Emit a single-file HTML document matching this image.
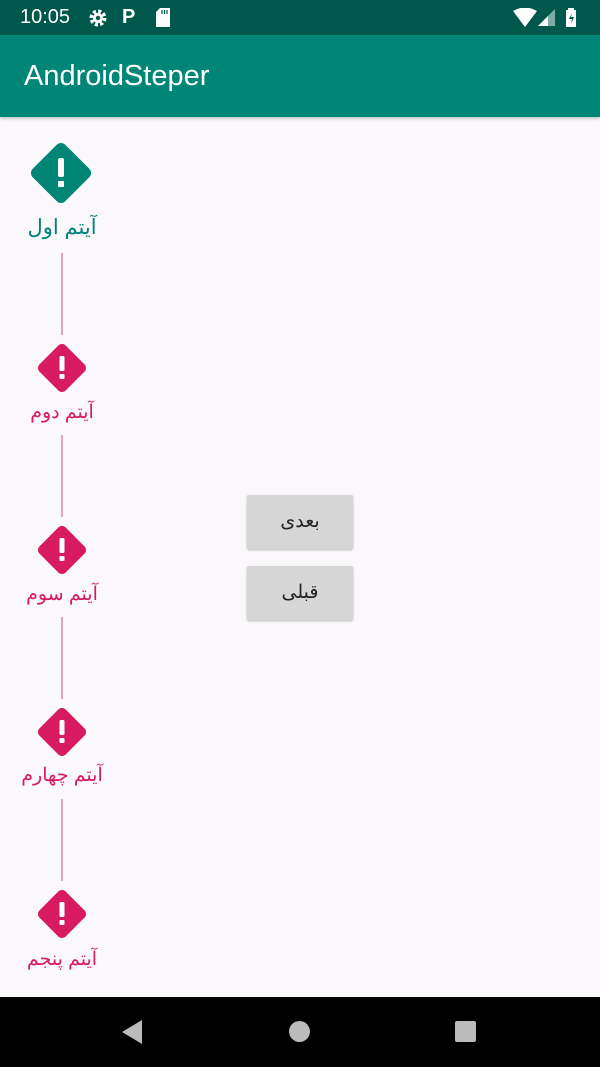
<!DOCTYPE html>
<html><head><meta charset="utf-8"><style>
body{margin:0;width:600px;height:1067px;background:#faf8fa;position:relative;overflow:hidden;font-family:"Liberation Sans","Noto Sans CJK SC",sans-serif}
.abs{position:absolute}
.lbl{position:absolute;left:0;width:124px;text-align:center;font-size:19px;line-height:24px;direction:rtl}
.line{position:absolute;left:61px;width:2px;background:#dca6bd}
.btn{position:absolute;left:247px;width:106px;height:54px;background:#d6d6d6;border-radius:2px;box-shadow:0 1px 2px rgba(0,0,0,.25);text-align:center;line-height:54px;font-size:19px;color:#222;direction:rtl}
</style></head><body>
<div class="abs" style="left:0;top:0;width:600px;height:35px;background:#00574b"></div>
<div class="abs" style="left:20px;top:6px;color:#fff;font-size:20px">10:05</div>
<svg class="abs" style="left:88px;top:8px" width="20" height="20" viewBox="0 0 20 20"><circle cx="10" cy="10" r="6.5" fill="none" stroke="#fff" stroke-width="4" stroke-dasharray="3 2.1"/><circle cx="10" cy="10" r="5" fill="#fff"/><circle cx="10" cy="10" r="2.2" fill="#00574b"/></svg>
<div class="abs" style="left:122px;top:6px;color:#fff;font-size:20px;font-weight:bold">P</div>
<svg class="abs" style="left:155px;top:8px" width="16" height="19"><path d="M5 0H15V19H1V4Z" fill="#fff"/><path d="M7 2v4M9.5 2v4M12 2v4" stroke="#00574b" stroke-width="1.2"/></svg>
<svg class="abs" style="left:512px;top:8px" width="26" height="20"><path d="M1 3Q13 -4 25 3L13 19Z" fill="#fff"/></svg>
<svg class="abs" style="left:538px;top:8px" width="18" height="19"><path d="M17 1V18H0Z" fill="#fff" opacity=".5"/><path d="M10 9V18H0L10 8Z" fill="#fff"/></svg>
<svg class="abs" style="left:565px;top:6px" width="12" height="22"><path d="M3 2h6v2h2v17H1V4h2z" fill="#fff"/><path d="M7 7L4 13h3l-1 5 3-7H6z" fill="#00574b"/></svg>
<div class="abs" style="left:0;top:35px;width:600px;height:82px;background:#008577;box-shadow:0 2px 3px rgba(0,0,0,.2)"></div>
<div class="abs" style="left:24px;top:60px;color:#fff;font-size:29px">AndroidSteper</div>

<svg class="abs" style="left:27px;top:139px" width="68" height="68" viewBox="0 0 68 68"><rect x="11" y="11" width="46" height="46" rx="6" transform="rotate(45 34 34)" fill="#008577"/><rect x="31" y="19" width="6" height="19" rx="2" fill="#fff"/><rect x="31" y="42" width="6" height="6" rx="1" fill="#fff"/></svg>
<div class="lbl" style="top:216px;color:#008577;font-size:21px">آیتم اول</div>
<div class="line" style="top:253px;height:82px"></div>

<svg class="abs" style="left:35px;top:341px" width="54" height="54" viewBox="0 0 54 54"><rect x="8.5" y="8.5" width="37" height="37" rx="5" transform="rotate(45 27 27)" fill="#d81b60"/><rect x="24.5" y="15" width="5" height="15" rx="1.5" fill="#fff"/><rect x="24.5" y="33" width="5" height="5" rx="1" fill="#fff"/></svg>
<div class="lbl" style="top:401px;color:#d81b60">آیتم دوم</div>
<div class="line" style="top:435px;height:82px"></div>

<svg class="abs" style="left:35px;top:523px" width="54" height="54" viewBox="0 0 54 54"><rect x="8.5" y="8.5" width="37" height="37" rx="5" transform="rotate(45 27 27)" fill="#d81b60"/><rect x="24.5" y="15" width="5" height="15" rx="1.5" fill="#fff"/><rect x="24.5" y="33" width="5" height="5" rx="1" fill="#fff"/></svg>
<div class="lbl" style="top:583px;color:#d81b60">آیتم سوم</div>
<div class="line" style="top:617px;height:82px"></div>

<svg class="abs" style="left:35px;top:705px" width="54" height="54" viewBox="0 0 54 54"><rect x="8.5" y="8.5" width="37" height="37" rx="5" transform="rotate(45 27 27)" fill="#d81b60"/><rect x="24.5" y="15" width="5" height="15" rx="1.5" fill="#fff"/><rect x="24.5" y="33" width="5" height="5" rx="1" fill="#fff"/></svg>
<div class="lbl" style="top:764px;color:#d81b60">آیتم چهارم</div>
<div class="line" style="top:799px;height:82px"></div>

<svg class="abs" style="left:35px;top:887px" width="54" height="54" viewBox="0 0 54 54"><rect x="8.5" y="8.5" width="37" height="37" rx="5" transform="rotate(45 27 27)" fill="#d81b60"/><rect x="24.5" y="15" width="5" height="15" rx="1.5" fill="#fff"/><rect x="24.5" y="33" width="5" height="5" rx="1" fill="#fff"/></svg>
<div class="lbl" style="top:948px;color:#d81b60">آیتم پنجم</div>

<div class="btn" style="top:495px">بعدی</div>
<div class="btn" style="top:566px">قبلی</div>

<div class="abs" style="left:0;top:997px;width:600px;height:70px;background:#000"></div>
<svg class="abs" style="left:120px;top:1019px" width="24" height="26"><path d="M22 1V25L2 13Z" fill="#bbb"/></svg>
<div class="abs" style="left:289px;top:1021px;width:21px;height:21px;border-radius:50%;background:#bbb"></div>
<div class="abs" style="left:455px;top:1021px;width:21px;height:21px;border-radius:2px;background:#bbb"></div>
</body></html>
